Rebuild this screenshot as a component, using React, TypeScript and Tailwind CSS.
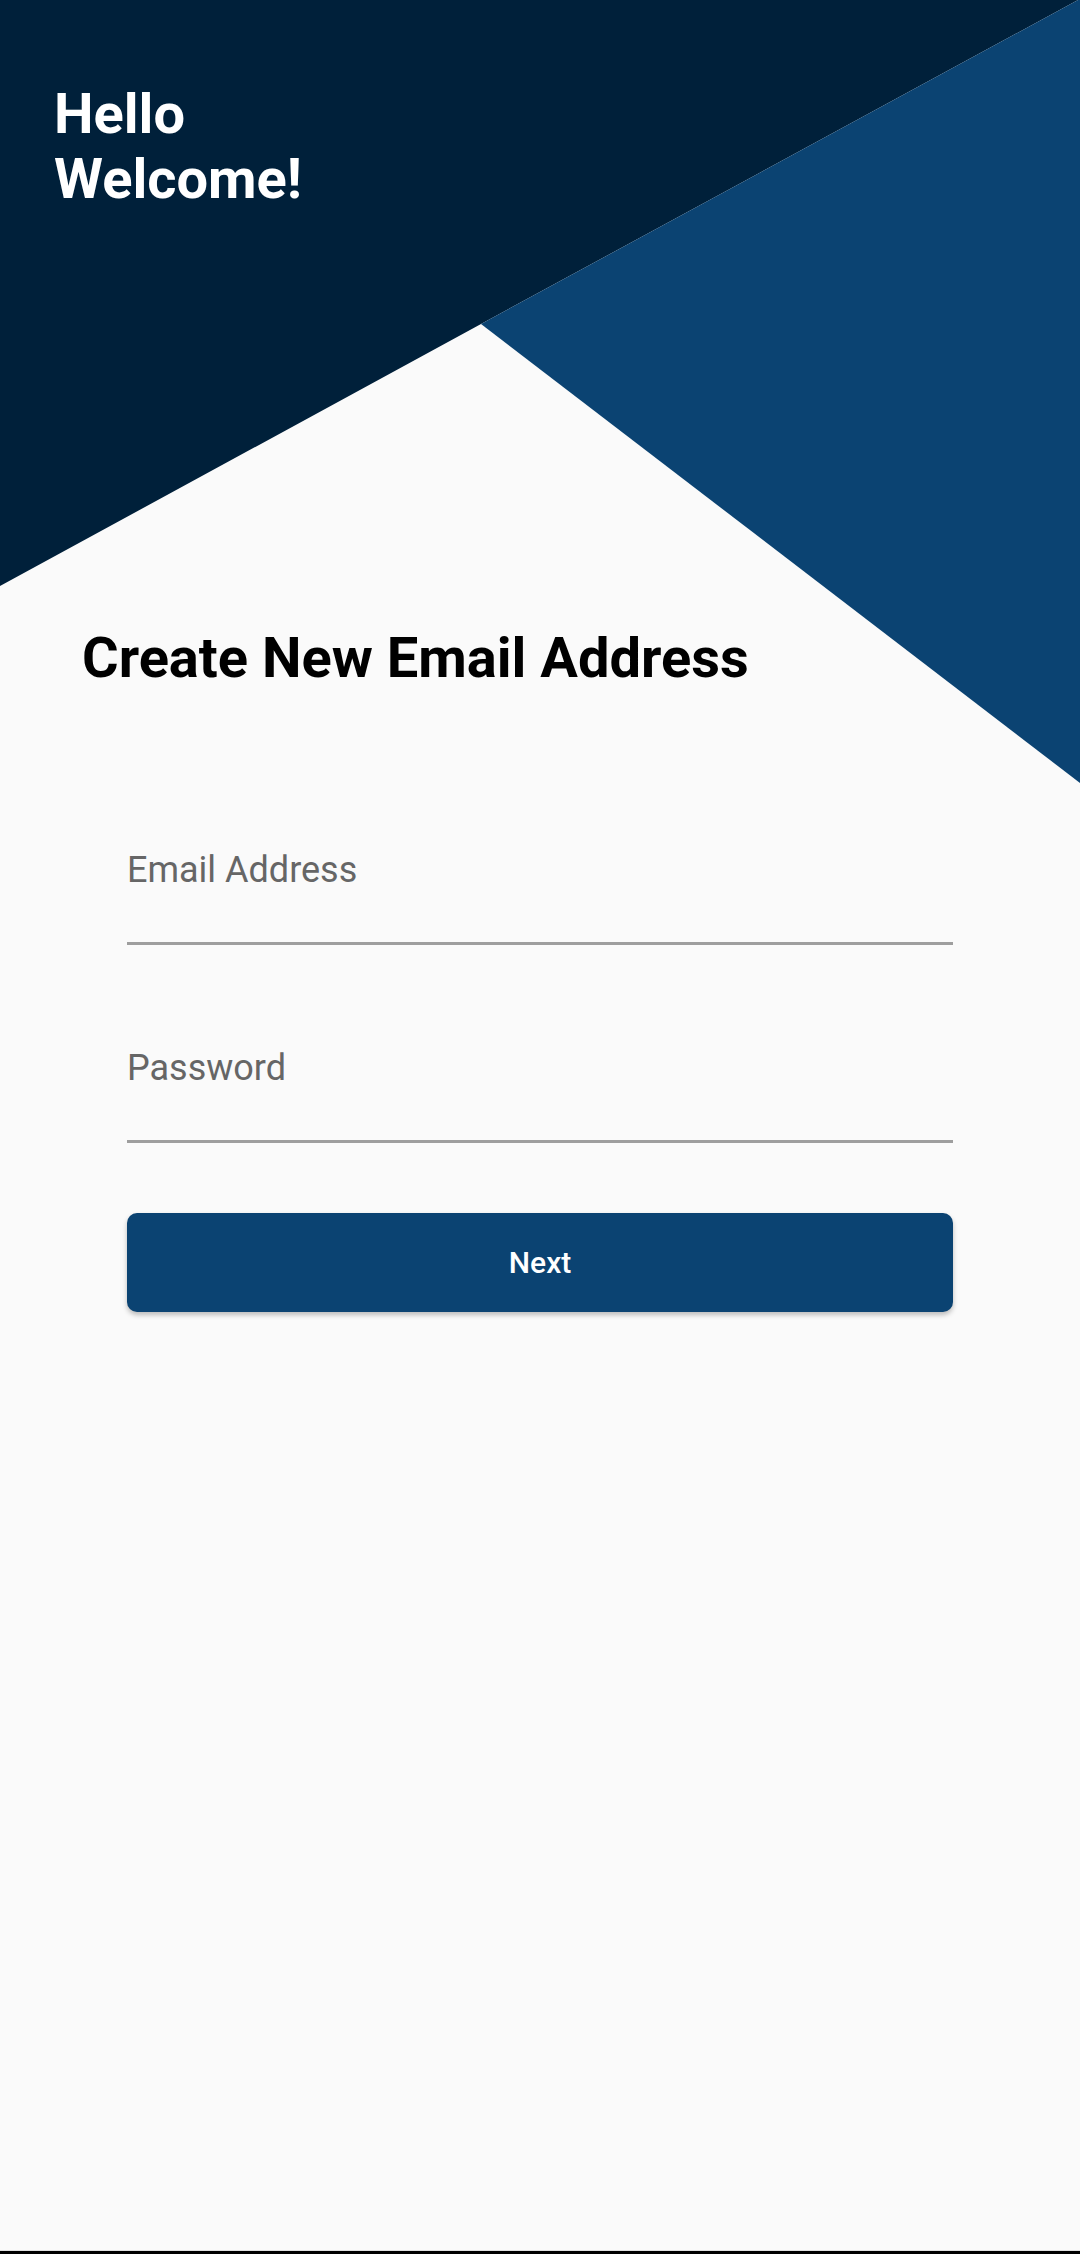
import React from 'react'

function Backdrop() {
  return (
    <svg
      className="absolute left-0 top-0"
      width={1080}
      height={800}
      viewBox="0 0 1080 800"
      aria-hidden
    >
      {/* dark top panel */}
      <polygon points="0,0 1078,0 481,324 0,586" fill="#00203a" />
      {/* light blue wedge */}
      <polygon points="1078,0 1080,0 1080,783 481,324" fill="#0b4372" />
    </svg>
  )
}

function Field({ label }: { label: string }) {
  return (
    <div className="flex flex-col">
      <span className="text-[36px] leading-[41px] text-[#666666]">{label}</span>
      <div className="mt-[51px] h-[3px] bg-[#9e9e9e]" />
    </div>
  )
}

export default function App() {
  return (
    <div
      className="relative flex h-[2254px] w-[1080px] flex-col overflow-hidden bg-[#fafafa]"
      style={{ fontFamily: 'Roboto, "Noto Sans", sans-serif' }}
    >
      <Backdrop />

      <div className="relative flex flex-col">
        {/* Greeting */}
        <h1 className="pl-[54px] pt-[82px] text-[56px] font-bold leading-[65px] text-white">
          Hello
          <br />
          Welcome!
        </h1>

        {/* Title */}
        <h2 className="mt-[414px] pl-[82px] text-[56px] font-bold leading-[65px] text-black">
          Create New Email Address
        </h2>

        {/* Form */}
        <div className="mt-[159px] flex flex-col px-[127px]">
          <Field label="Email Address" />
          <div className="mt-[103px]">
            <Field label="Password" />
          </div>
          <button className="mt-[70px] flex h-[99px] items-center justify-center rounded-[10px] bg-[#0b4372] text-[30px] font-medium text-white shadow-[0_3px_5px_rgba(0,0,0,0.25)]">
            Next
          </button>
        </div>
      </div>

      {/* system nav edge */}
      <div className="mt-auto h-[1px] bg-[#e0e0e0]" />
      <div className="h-[3px] bg-black" />
    </div>
  )
}
